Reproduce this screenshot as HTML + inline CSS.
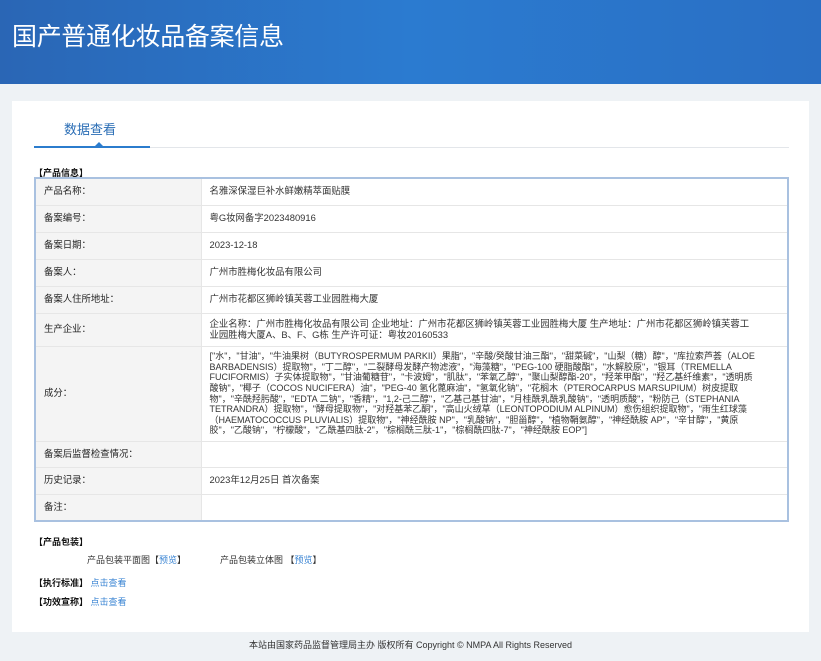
<!DOCTYPE html>
<html><head><meta charset="utf-8"><style>
*{margin:0;padding:0;box-sizing:border-box}
body{width:821px;height:661px;background:#eef2f5;font-family:"Liberation Sans","Noto Sans CJK SC",sans-serif;font-size:9px;color:#333;position:relative;overflow:hidden}
.hd{position:absolute;left:0;top:0;width:821px;height:84px;background:linear-gradient(90deg,#2a66b5,#2b7bd0 50%,#2a6fc4);overflow:hidden}
.hd h1{position:absolute;left:12px;top:17px;color:#fff;font-size:25px;font-weight:normal;letter-spacing:-0.3px}
.panel{position:absolute;left:12px;top:101px;width:797px;height:531px;background:#fff}
.tab{position:absolute;left:52px;top:18px;font-size:13px;color:#2a6db5}
.line{position:absolute;left:22px;top:46px;width:755px;height:1px;background:#e3e6ea}
.line2{position:absolute;left:22px;top:45px;width:116px;height:2px;background:#2b7ccd}
.tri{position:absolute;left:83px;top:41px;border:4px solid transparent;border-bottom-color:#2b7ccd;border-top:0}
.sec{position:absolute;font-weight:bold;color:#111;font-size:9px}
table{position:absolute;left:22px;top:76px;width:755px;border-collapse:collapse;border:2px solid #a9c1e0}
td{border-bottom:1px solid #e6e6e6;padding:0 8px;font-size:9.4px;line-height:10.6px;color:#333}
td.l{width:166px;background:#f4f4f4;color:#222;border-right:1px solid #e6e6e6}
td.c{font-size:9px;line-height:10.6px;padding-right:26px}
a{color:#3a84d3;text-decoration:none}
.ft{position:absolute;top:638px;left:0;width:821px;text-align:center;font-size:9px;color:#333}
</style></head><body>
<div class="hd"><h1>国产普通化妆品备案信息</h1></div>
<div class="panel">
<div class="tab">数据查看</div>
<div class="line"></div><div class="line2"></div><div class="tri"></div>
<div class="sec" style="left:22px;top:65px">【产品信息】</div>
<table>
<tr style="height:27px"><td class="l">产品名称：</td><td>名雅深保湿巨补水鲜嫩精萃面贴膜</td></tr>
<tr style="height:27px"><td class="l">备案编号：</td><td>粤G妆网备字2023480916</td></tr>
<tr style="height:27px"><td class="l">备案日期：</td><td>2023-12-18</td></tr>
<tr style="height:27px"><td class="l">备案人：</td><td>广州市胜梅化妆品有限公司</td></tr>
<tr style="height:27px"><td class="l">备案人住所地址：</td><td>广州市花都区狮岭镇芙蓉工业园胜梅大厦</td></tr>
<tr style="height:33px"><td class="l">生产企业：</td><td style="padding-right:30px">企业名称：广州市胜梅化妆品有限公司 企业地址：广州市花都区狮岭镇芙蓉工业园胜梅大厦 生产地址：广州市花都区狮岭镇芙蓉工业园胜梅大厦A、B、F、G栋 生产许可证：粤妆20160533</td></tr>
<tr style="height:95px"><td class="l">成分：</td><td class="c">["水"，"甘油"，"牛油果树（BUTYROSPERMUM PARKII）果脂"，"辛酸/癸酸甘油三酯"，"甜菜碱"，"山梨（糖）醇"，"库拉索芦荟（ALOE BARBADENSIS）提取物"，"丁二醇"，"二裂酵母发酵产物滤液"，"海藻糖"，"PEG-100 硬脂酸酯"，"水解胶原"，"银耳（TREMELLA FUCIFORMIS）子实体提取物"，"甘油葡糖苷"，"卡波姆"，"肌肽"，"苯氧乙醇"，"聚山梨醇酯-20"，"羟苯甲酯"，"羟乙基纤维素"，"透明质酸钠"，"椰子（COCOS NUCIFERA）油"，"PEG-40 氢化蓖麻油"，"氢氧化钠"，"花榈木（PTEROCARPUS MARSUPIUM）树皮提取物"，"辛酰羟肟酸"，"EDTA 二钠"，"香精"，"1,2-己二醇"，"乙基己基甘油"，"月桂酰乳酰乳酸钠"，"透明质酸"，"粉防己（STEPHANIA TETRANDRA）提取物"，"酵母提取物"，"对羟基苯乙酮"，"高山火绒草（LEONTOPODIUM ALPINUM）愈伤组织提取物"，"雨生红球藻（HAEMATOCOCCUS PLUVIALIS）提取物"，"神经酰胺 NP"，"乳酸钠"，"胆甾醇"，"植物鞘氨醇"，"神经酰胺 AP"，"辛甘醇"，"黄原胶"，"乙酸钠"，"柠檬酸"，"乙酰基四肽-2"，"棕榈酰三肽-1"，"棕榈酰四肽-7"，"神经酰胺 EOP"]</td></tr>
<tr style="height:26px"><td class="l">备案后监督检查情况：</td><td></td></tr>
<tr style="height:27px"><td class="l">历史记录：</td><td>2023年12月25日 首次备案</td></tr>
<tr style="height:27px"><td class="l">备注：</td><td></td></tr>
</table>
<div class="sec" style="left:22px;top:434px">【产品包装】</div>
<div style="position:absolute;left:75px;top:452px">产品包装平面图【<a>预览</a>】</div>
<div style="position:absolute;left:208px;top:452px">产品包装立体图 【<a>预览</a>】</div>
<div class="sec" style="left:22px;top:475px">【执行标准】 <a style="font-weight:normal">点击查看</a></div>
<div class="sec" style="left:22px;top:494px">【功效宣称】 <a style="font-weight:normal">点击查看</a></div>
</div>
<div class="ft">本站由国家药品监督管理局主办 版权所有 Copyright © NMPA All Rights Reserved</div>
</body></html>
